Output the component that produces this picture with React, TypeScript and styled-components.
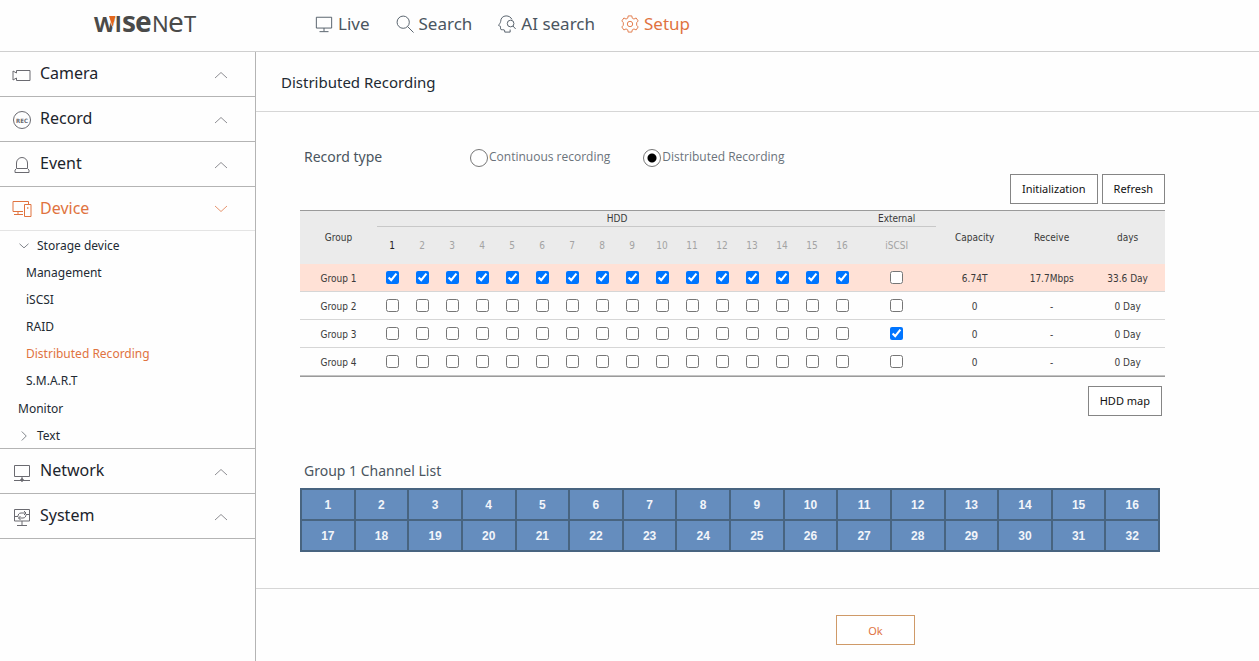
import React, { useState } from 'react';
import styled, { createGlobalStyle } from 'styled-components';

const accent = '#e0733f';
const line = '#b4b4b4';
const tableFont = '"DejaVu Sans Condensed", Tahoma, sans-serif';

const GlobalStyle = createGlobalStyle`
  *, *::before, *::after { box-sizing: border-box; }
  body {
    margin: 0;
    background: #fefefe;
    color: #222a33;
    font-family: "Noto Sans", "Open Sans", sans-serif;
  }
  ul { list-style: none; margin: 0; padding: 0; }
  h1, h2 { margin: 0; font-weight: 400; }
  button { font-family: inherit; cursor: pointer; }
  a { color: inherit; text-decoration: none; }
`;

const Page = styled.div`
  min-height: 100vh;
  display: flex;
  flex-direction: column;
`;

const TopBar = styled.header`
  display: flex;
  align-items: center;
  height: 52px;
  padding: 0 24px 3px 92px;
  border-bottom: 1px solid #cfcfcf;
`;

const LogoLink = styled.a`
  display: block;
  width: 223px;
  height: 44px;
`;

const TopNav = styled.nav`
  display: flex;
  gap: 26px;
`;

const TopLink = styled.a<{ $active?: boolean }>`
  display: flex;
  align-items: center;
  gap: 5px;
  font-size: 17px;
  line-height: 24px;
  color: ${p => (p.$active ? accent : '#4a5560')};
`;

const Body = styled.div`
  flex: 1;
  display: flex;
`;

const Sidebar = styled.nav`
  flex: 0 0 256px;
  border-right: 1px solid ${line};
`;

const SectionButton = styled.button<{ $active?: boolean }>`
  display: grid;
  grid-template-columns: 20px 1fr 16px;
  align-items: center;
  column-gap: 8px;
  width: 100%;
  height: ${p => (p.$active ? 44 : 45)}px;
  padding: 0 26px 0 12px;
  border: 0;
  border-bottom: 1px solid ${p => (p.$active ? '#e4e4e4' : line)};
  background: none;
  text-align: left;
  font-size: 16px;
  line-height: 24px;
  color: ${p => (p.$active ? accent : '#1c242c')};

  svg { margin-top: 1px; color: ${p => (p.$active ? accent : '#6a6a70')}; }
  span { padding-bottom: 2px; }
`;

const SubMenu = styled.ul`
  border-bottom: 1px solid ${line};
`;

const SubGroup = styled.ul`
  padding-bottom: 1px;
`;

const SubLink = styled.a<{ $indent: number; $active?: boolean }>`
  display: flex;
  align-items: center;
  gap: 7px;
  height: 27px;
  padding-top: 2px;
  padding-left: ${p => p.$indent}px;
  font-size: 12px;
  line-height: 18px;
  color: ${p => (p.$active ? accent : '#222a33')};
`;

const Main = styled.main`
  flex: 1;
  min-width: 0;
`;

const Title = styled.h1`
  padding: 18px 25px 17px;
  border-bottom: 1px solid #d6d6d6;
  font-size: 15px;
  line-height: 24px;
`;

const Content = styled.div`
  padding: 32px 94px 36px 44px;
`;

const Options = styled.fieldset`
  display: flex;
  align-items: center;
  margin: 0;
  padding: 0 0 0 4px;
  border: 0;
`;

const OptionsTitle = styled.span`
  width: 166px;
  font-size: 14px;
  line-height: 26px;
  color: #4a5560;
`;

const Option = styled.label`
  display: flex;
  align-items: center;
  gap: 1px;
  margin-right: 33px;
  font-family: "Open Sans", sans-serif;
  font-size: 12px;
  line-height: 18px;
  color: #6b737b;
`;

const Radio = styled.input`
  appearance: none;
  width: 18px;
  height: 18px;
  margin: 2px 0 0;
  border: 1px solid #777;
  border-radius: 50%;
  background: #fff;

  &:checked {
    background: radial-gradient(circle, #000 0 4px, #fff 5px);
  }
`;

const Actions = styled.div<{ $inset?: boolean }>`
  display: flex;
  justify-content: flex-end;
  gap: 4px;
  padding: ${p => (p.$inset ? '9px 3px 0 0' : '4px 0 6px')};
`;

const Button = styled.button`
  height: 30px;
  padding: 0 11px;
  border: 1px solid #858585;
  background: #fff;
  font-size: 11px;
  line-height: 16px;
  color: #111;
`;

const GroupTable = styled.table`
  width: 100%;
  table-layout: fixed;
  border-collapse: separate;
  border-spacing: 0;
  border-top: 1px solid #9a9a9a;
  border-bottom: 1px solid #9a9a9a;
  font-family: ${tableFont};
  font-size: 10px;
  line-height: 14px;
  text-align: center;
  color: #3a3a3a;

  th, td { padding: 0; font-weight: 400; }
  thead { background: #ebebeb; }
`;

const Col = styled.col<{ $w: number }>`
  width: ${p => p.$w}px;
`;

const SpanHead = styled.th`
  height: 16px;
  border-bottom: 1px solid #c8c8c8;
  vertical-align: bottom;
`;

const DiskHead = styled.th<{ $on?: boolean }>`
  height: 37px;
  color: ${p => (p.$on ? '#222' : '#a3a3a3')};
`;

const GroupRow = styled.tr<{ $selected?: boolean }>`
  background: ${p => (p.$selected ? '#ffe1d6' : 'transparent')};

  td, th { height: 28px; border-bottom: 1px solid #d6d6d6; }
  td, th { padding-top: 2px; }
  &:last-child td, &:last-child th { border-bottom-color: #c4c4c4; }
`;

const Check = styled.input`
  display: block;
  width: 13px;
  height: 13px;
  margin: -2px auto 0;
`;

const ListTitle = styled.h2`
  margin: 42px 0 4px;
  padding-left: 4px;
  font-size: 14px;
  line-height: 26px;
  color: #4a5560;
`;

const ChannelArea = styled.div`
  padding-right: 5px;
`;

const ChannelTable = styled.table`
  width: 100%;
  table-layout: fixed;
  border-collapse: collapse;
  background: #658dbe;
  font-family: "Liberation Sans", Arial, sans-serif;
  font-size: 12px;
  line-height: 16px;
  font-weight: 700;
  text-align: center;
  color: #f2f5fa;

  td { height: 31px; padding: 0; border: 2px solid #486480; }
`;

const Footer = styled.footer`
  display: flex;
  justify-content: center;
  padding: 26px 0 16px 236px;
  border-top: 1px solid #d6d6d6;
`;

const OkButton = styled.button`
  width: 79px;
  height: 30px;
  border: 1px solid #cf9a68;
  background: #fff;
  font-size: 11px;
  color: ${accent};
`;

const Icon = ({ size = 20, children }: { size?: number; children: React.ReactNode }) => (
  <svg width={size} height={size} viewBox="0 0 20 20" fill="none" stroke="currentColor" strokeWidth="1" aria-hidden="true">
    {children}
  </svg>
);

const Chevron = ({ dir, size = 16 }: { dir: 'up' | 'down' | 'right'; size?: number }) => (
  <svg width={size} height={size} viewBox="0 0 16 16" fill="none" stroke="currentColor" strokeWidth="1" opacity=".75" aria-hidden="true">
    <path d={{ up: 'M2 11 8 5.500 14 11', down: 'M2 5 8 10.500 14 5', right: 'M5 2 11 8 5 14' }[dir]} />
  </svg>
);

const Logo = () => (
  <svg width="110" height="44" viewBox="0 0 110 44" fill="#4a4a49" fontFamily="Noto Sans, sans-serif" role="img">
    <g fontSize="28" fontWeight="700">
      <text x="2" y="30" fontSize="22">W</text>
      <text x="23" y="30" fontSize="22" fontFamily="Roboto, sans-serif">I</text>
      <text x="30" y="30">s</text>
      <text x="43" y="30">e</text>
    </g>
    <g fontSize="22">
      <text x="60" y="30">N</text>
      <text x="76" y="30" fontSize="28">e</text>
      <text x="92" y="30">T</text>
    </g>
    <path d="M16 13h8l-3.500 13z" fill="#fefefe" />
    <path d="M17 14h6.500l-3 11z" fill="#e2661c" />
  </svg>
);

const icons = {
  live: <Icon size={18}><path d="M1.500 2.500h17v12h-17zM10 14.500v3.500M5 18.500h10" /></Icon>,
  search: <Icon size={18}><circle cx="8" cy="8" r="6.800" /><path d="m13 13 6.500 6.500" /></Icon>,
  ai: (
    <Icon size={18}>
      <path d="M15.500 5C14.500 2.500 12 1 9 1 5.500 1 3 3.600 3 7c0 1.500-2 3.500-2.300 4.700.2.600 2 .5 2.100 1 .1.700-.3 3.100.6 3.600.7.400 2.800-.3 3.600.3.500.4.500 1.400.5 2.400h6v-2.800" />
      <circle cx="14" cy="9.500" r="3.700" /><path d="m16.600 12.200 3 3.300" />
    </Icon>
  ),
  setup: (
    <Icon size={18}>
      <path d="M8 1h4l.5 2.500 1.900 1 2.400-1.200 2.300 3.300-1.700 1.900v2.900l1.700 1.900-2.300 3.300-2.400-1.100-1.900 1L12 19H8l-.5-2.500-1.900-1-2.400 1.100-2.300-3.300 1.700-1.900V8.500L.9 6.600l2.300-3.300 2.400 1.200 1.900-1z" strokeLinejoin="round" />
      <circle cx="10" cy="10" r="3" />
    </Icon>
  ),
  camera: <Icon><path d="M4.500 5.500h13.500v10H4.500v-2.500L1 15V6l3.500 2z" /></Icon>,
  record: (
    <Icon>
      <circle cx="10" cy="10" r="8.500" />
      <text x="10" y="12.500" textAnchor="middle" fontSize="6" fontWeight="700" fontFamily="DejaVu Sans Condensed, sans-serif" fill="currentColor" stroke="none">REC</text>
    </Icon>
  ),
  event: <Icon><path d="M4.500 13V8a5.500 5.500 0 0 1 11 0v5M4.500 13.500h11l1.500 1.500v2.500H3V15z" /></Icon>,
  device: <Icon><path d="M11 12.500H1v-10h15.500V5M6 12.500v3M2 15.500h9M12.500 5.500h6.500v12h-6.500zM15.800 8v2" /></Icon>,
  network: <Icon><path d="M2.500 3.500h15v11h-15zM10 14.500v3M2 18.500h16" /><circle cx="10" cy="18" r="1.300" fill="currentColor" /></Icon>,
  system: <Icon><path d="M2.500 2.500h15v11.500h-15zM10 14v4M5 18.500h10M2.500 9.500h3.500c0-2 1-3.500 3-3.500h4.500M12 4l2 2-2 2M17.500 7.500H14c0 2-1 3.500-3 3.500H6.500M8.500 9l-2 2 2 2" /></Icon>,
};

const topLinks = [
  { label: 'Live', icon: icons.live },
  { label: 'Search', icon: icons.search },
  { label: 'AI search', icon: icons.ai },
  { label: 'Setup', icon: icons.setup, active: true },
];

const Section = ({ label, icon, open }: { label: string; icon: React.ReactNode; open?: boolean }) => (
  <SectionButton type="button" $active={open} aria-expanded={!!open}>
    {icon}
    <span>{label}</span>
    <Chevron dir={open ? 'down' : 'up'} />
  </SectionButton>
);

const storageItems = ['Management', 'iSCSI', 'RAID', 'Distributed Recording', 'S.M.A.R.T'];
const disks = Array.from({ length: 16 }, (_, i) => i + 1);

const groups = [
  { name: 'Group 1', disks: true, iscsi: false, capacity: '6.74T', receive: '17.7Mbps', days: '33.6 Day' },
  { name: 'Group 2', disks: false, iscsi: false, capacity: '0', receive: '-', days: '0 Day' },
  { name: 'Group 3', disks: false, iscsi: true, capacity: '0', receive: '-', days: '0 Day' },
  { name: 'Group 4', disks: false, iscsi: false, capacity: '0', receive: '-', days: '0 Day' },
];

export default function App() {
  const [type, setType] = useState('Distributed Recording');

  return (
    <Page>
      <GlobalStyle />
      <TopBar>
        <LogoLink href="#" aria-label="Wisenet"><Logo /></LogoLink>
        <TopNav>
          {topLinks.map(l => (
            <TopLink key={l.label} href="#" $active={l.active}>{l.icon}{l.label}</TopLink>
          ))}
        </TopNav>
      </TopBar>
      <Body>
        <Sidebar>
          <Section label="Camera" icon={icons.camera} />
          <Section label="Record" icon={icons.record} />
          <Section label="Event" icon={icons.event} />
          <Section label="Device" icon={icons.device} open />
          <SubMenu>
            <li>
              <SubLink href="#" $indent={18}><Chevron dir="down" size={12} />Storage device</SubLink>
              <SubGroup>
                {storageItems.map(s => (
                  <li key={s}><SubLink href="#" $indent={26} $active={s === 'Distributed Recording'}>{s}</SubLink></li>
                ))}
              </SubGroup>
            </li>
            <li><SubLink href="#" $indent={18}>Monitor</SubLink></li>
            <li><SubLink href="#" $indent={18}><Chevron dir="right" size={12} />Text</SubLink></li>
          </SubMenu>
          <Section label="Network" icon={icons.network} />
          <Section label="System" icon={icons.system} />
        </Sidebar>
        <Main>
          <Title>Distributed Recording</Title>
          <Content>
            <Options aria-label="Record type">
              <OptionsTitle>Record type</OptionsTitle>
              {['Continuous recording', 'Distributed Recording'].map(o => (
                <Option key={o}>
                  <Radio type="radio" name="type" checked={type === o} onChange={() => setType(o)} />
                  {o}
                </Option>
              ))}
            </Options>
            <Actions>
              <Button type="button">Initialization</Button>
              <Button type="button">Refresh</Button>
            </Actions>
            <GroupTable>
              <colgroup>
                <Col $w={77} />
                {disks.map(d => <Col key={d} $w={30} />)}
                <Col $w={79} />
                <Col $w={77} />
                <Col $w={77} />
                <Col $w={75} />
              </colgroup>
              <thead>
                <tr>
                  <th rowSpan={2}>Group</th>
                  <SpanHead colSpan={16}>HDD</SpanHead>
                  <SpanHead>External</SpanHead>
                  <th rowSpan={2}>Capacity</th>
                  <th rowSpan={2}>Receive</th>
                  <th rowSpan={2}>days</th>
                </tr>
                <tr>
                  {disks.map(d => <DiskHead key={d} $on={d === 1}>{d}</DiskHead>)}
                  <DiskHead>iSCSI</DiskHead>
                </tr>
              </thead>
              <tbody>
                {groups.map((g, i) => (
                  <GroupRow key={g.name} $selected={i === 0}>
                    <th scope="row">{g.name}</th>
                    {disks.map(d => (
                      <td key={d}><Check type="checkbox" defaultChecked={g.disks} aria-label={`${g.name} HDD ${d}`} /></td>
                    ))}
                    <td><Check type="checkbox" defaultChecked={g.iscsi} aria-label={`${g.name} iSCSI`} /></td>
                    <td>{g.capacity}</td>
                    <td>{g.receive}</td>
                    <td>{g.days}</td>
                  </GroupRow>
                ))}
              </tbody>
            </GroupTable>
            <Actions $inset>
              <Button type="button">HDD map</Button>
            </Actions>
            <ListTitle>Group 1 Channel List</ListTitle>
            <ChannelArea>
              <ChannelTable>
                <tbody>
                  {[0, 16].map(start => (
                    <tr key={start}>{disks.map(d => <td key={d}>{start + d}</td>)}</tr>
                  ))}
                </tbody>
              </ChannelTable>
            </ChannelArea>
          </Content>
          <Footer><OkButton type="button">Ok</OkButton></Footer>
        </Main>
      </Body>
    </Page>
  );
}
